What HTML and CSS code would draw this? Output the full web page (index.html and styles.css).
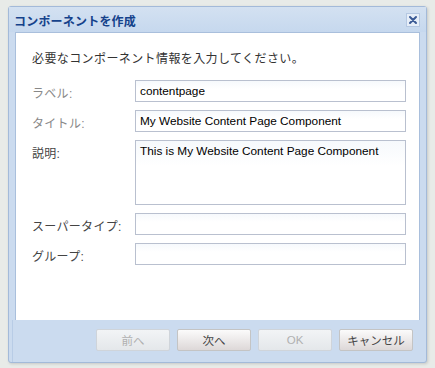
FILE: index.html
```html
<!DOCTYPE html>
<html lang="ja">
<head>
  <meta charset="UTF-8">
  <title>コンポーネントを作成</title>
  <link rel="stylesheet" href="styles.css">
</head>
<body>
  <div class="dialog">
    <div class="dialog-head">
      <span class="dialog-title">コンポーネントを作成</span>
      <span class="close">
        <svg width="10" height="10" viewBox="0 0 10 10"><path d="M2 2 L8 8 M8 2 L2 8" stroke="#3b5a95" stroke-width="2" stroke-linecap="round"/></svg>
      </span>
    </div>
    <div class="panel">
      <p class="intro">必要なコンポーネント情報を入力してください。</p>
      <div class="form">
        <label class="lbl light">ラベル:</label>
        <div class="field">contentpage</div>
        <label class="lbl light">タイトル:</label>
        <div class="field">My Website Content Page Component</div>
        <label class="lbl">説明:</label>
        <div class="field area">This is My Website Content Page Component</div>
        <label class="lbl">スーパータイプ:</label>
        <div class="field"></div>
        <label class="lbl">グループ:</label>
        <div class="field"></div>
      </div>
    </div>
    <div class="foot">
      <button class="btn off">前へ</button>
      <button class="btn">次へ</button>
      <button class="btn off">OK</button>
      <button class="btn">キャンセル</button>
    </div>
  </div>
</body>
</html>
```

FILE: styles.css
```css
body { margin: 0; padding: 6px 8px; background: #e8ebe8; font-family: "Liberation Sans", "Noto Sans CJK JP", sans-serif; }
.dialog { width: 417px; height: 355px; border: 1px solid #a3bad9; background: #cbdbef; border-radius: 3px; display: flex; flex-direction: column; box-shadow: 1px 1px 3px rgba(0,0,0,0.15); }
.dialog-head { height: 25px; display: flex; align-items: center; justify-content: space-between; padding: 0 6px 0 5px; background: linear-gradient(#d3e1f1, #c6d8ee); }
.dialog-title { font-size: 12px; font-weight: bold; color: #15428b; letter-spacing: 0.2px; margin-top: 2px; }
.close { width: 12px; height: 12px; background: #e6eef8; border: 1px solid #b5c8e2; display: flex; align-items: center; justify-content: center; margin-top: 1px; }
.panel { margin: 0 6px; height: 287px; background: #fff; border: 1px solid #a9bfdc; border-bottom: 0; padding: 0 13px 0 16px; }
.intro { margin: 16px 0 0; font-size: 12px; color: #333; letter-spacing: 0.4px; }
.form { display: grid; grid-template-columns: 103px 271px; row-gap: 8px; margin-top: 14px; }
.lbl { font-size: 12px; color: #444; padding-top: 4px; letter-spacing: 0.3px; }
.lbl.light { color: #888; }
.field { border: 1px solid #b9c0cf; background: linear-gradient(#f6f9fc, #fff 40%); font-size: 11.8px; color: #000; padding: 2px 4px 0; box-sizing: border-box; height: 22px; line-height: 17px; white-space: nowrap; overflow: hidden; }
.field.area { height: 65px; }
.foot { flex: 1; display: flex; justify-content: flex-end; gap: 7px; padding: 9px 13px 0 0; border-left: 1px solid #b8cce6; margin-left: 3px; }
.btn { width: 74px; height: 22px; font-family: inherit; font-size: 11.5px; color: #444; border: 1px solid #c4c4c4; border-radius: 2px; background: linear-gradient(#fbfbfb, #e9e6e6 60%, #ddd8d8); padding: 0; }
.btn.off { color: #b0b0b0; background: linear-gradient(#f2f4f6, #e4e7ea); border-color: #cfd4da; }
```
